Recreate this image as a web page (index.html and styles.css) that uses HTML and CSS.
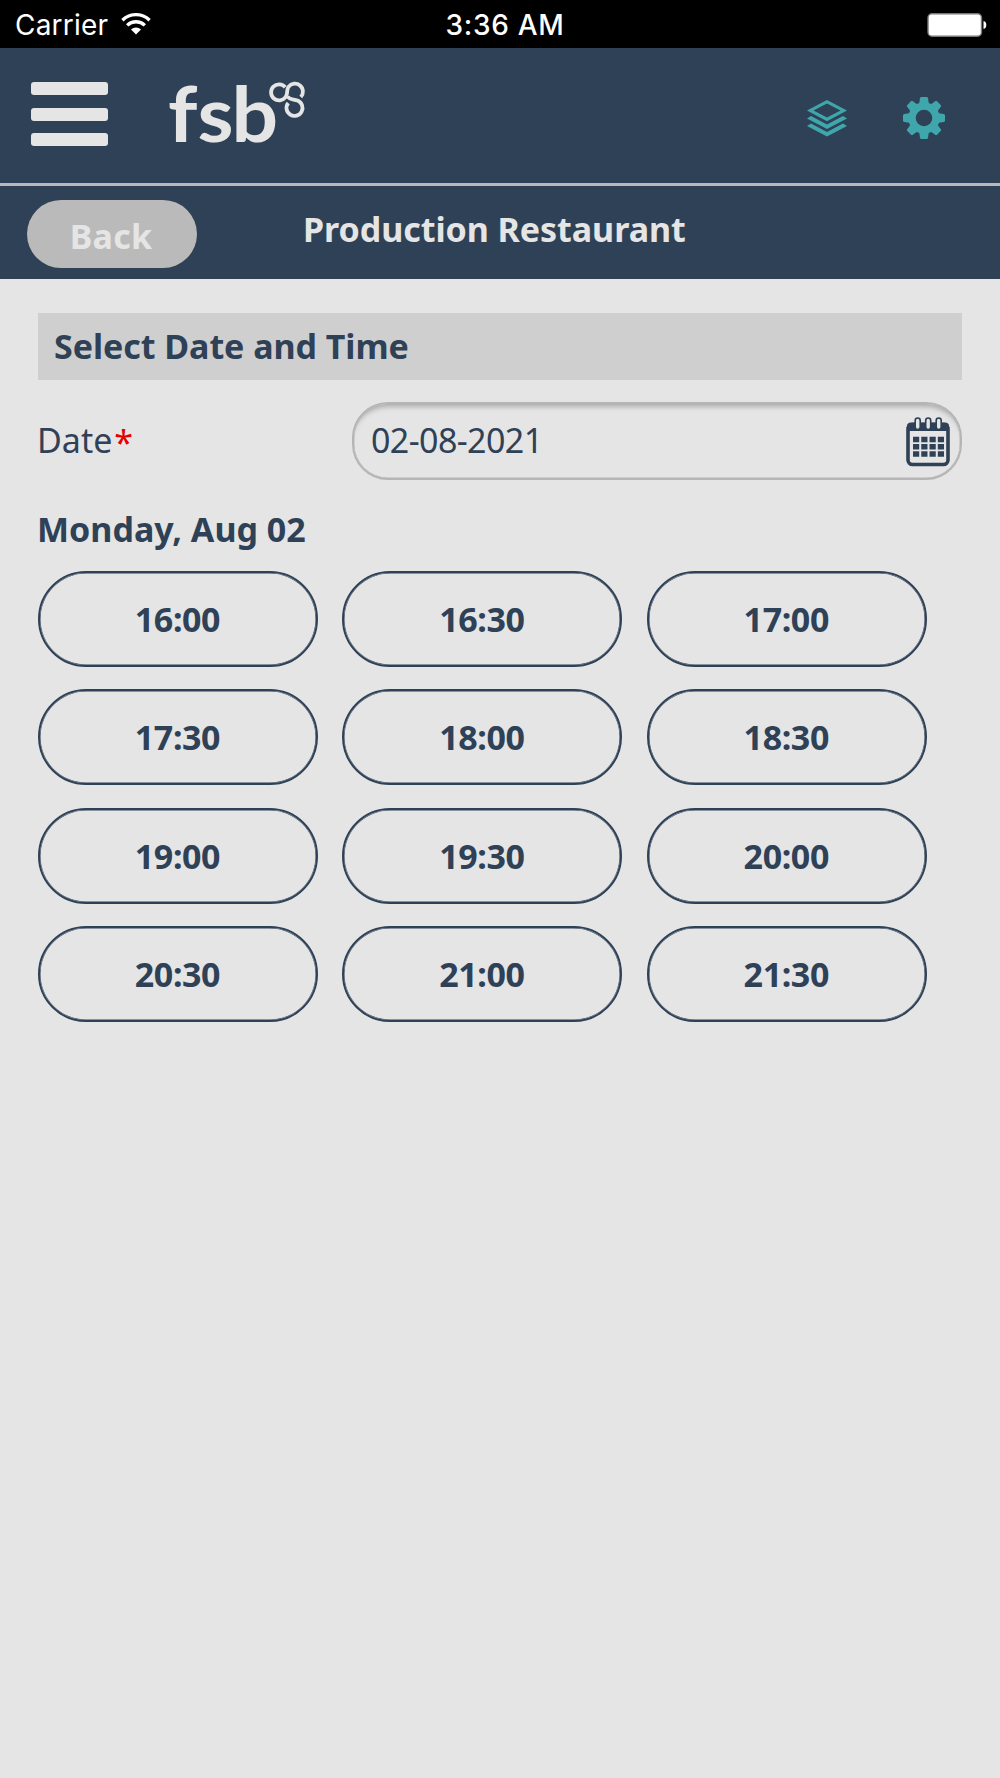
FILE: index.html
```html
<!DOCTYPE html>
<html lang="en">
<head>
<meta charset="utf-8">
<title>Production Restaurant</title>
<link rel="stylesheet" href="styles.css">
</head>
<body>
<div class="status">
  <div class="carrier"><span class="carrier-name">Carrier</span>
    <svg class="wifi" width="30" height="22" viewBox="0 0 30 22"><g fill="none" stroke="#fff" stroke-width="3.4"><path d="M1.4 7.2A19.5 19.5 0 0 1 28.6 7.2"/><path d="M6.2 12.4A12.6 12.6 0 0 1 23.8 12.4"/></g><path d="M15 21.5L10 16.5A7.2 7.2 0 0 1 20 16.5Z" fill="#fff"/></svg>
  </div>
  <div class="clock">3:36 AM</div>
  <svg class="battery" width="60" height="24" viewBox="0 0 60 24"><rect x="1" y=".8" width="53.500" height="22.400" rx="4" fill="#fff" stroke="#777" stroke-width="1.4"/><path d="M56.500 8Q59.300 8.500 59.300 12T56.500 16Z" fill="#fff"/></svg>
</div>
<header class="header">
  <button class="menu" aria-label="Menu"><span></span><span></span><span></span></button>
  <svg class="logo" width="150" height="110" viewBox="160 58 150 110" role="img" aria-label="fsb">
    <g class="wordmark"><text transform="translate(168 141.800) scale(1.080 1)">f</text><text transform="translate(197.500 141.800) scale(1.080 1)">s</text><text transform="translate(231.500 141.800) scale(1.080 1)">b</text></g>
    <g fill="none" stroke="#e5e5e5" stroke-width="3.8"><path d="M285.2 87.2A8 8 0 1 0 285.6 97C288.5 93 286 90 288.5 86.8A8 8 0 1 1 300.8 97"/><path d="M287.5 96.500C290 100 293 99 297.5 100.5A8 8 0 1 1 288.2 103"/></g>
  </svg>
  <div class="tools">
    <svg width="42" height="42" viewBox="806 97 42 42"><g fill="#3fa7ab"><path fill-rule="evenodd" d="M807 110.500L827 100L847 110.500L827 121.300ZM813.500 110.500L827 117.500L840.500 110.500L827 103.600Z"/><path id="sheet" d="M807 118.500L811 116L827 124.500L843 116L847 118.500L827 128.900Z"/><use href="#sheet" y="7.600"/></g></svg>
    <svg width="42" height="42" viewBox="0 0 42 42"><g fill="#3fa7ab"><path id="tooth" d="M17 1.2Q17.2 0 18.400 0H23.600Q24.800 0 25 1.200L26 8H16Z"/><use href="#tooth" transform="rotate(45 21 21)"/><use href="#tooth" transform="rotate(90 21 21)"/><use href="#tooth" transform="rotate(135 21 21)"/><use href="#tooth" transform="rotate(180 21 21)"/><use href="#tooth" transform="rotate(225 21 21)"/><use href="#tooth" transform="rotate(270 21 21)"/><use href="#tooth" transform="rotate(315 21 21)"/></g><circle cx="21" cy="21" r="12" fill="none" stroke="#3fa7ab" stroke-width="7.400"/></svg>
  </div>
</header>
<div class="titlebar">
  <button class="back">Back</button>
  <h1 class="title">Production Restaurant</h1>
</div>
<main class="content">
  <h2 class="section">Select Date and Time</h2>
  <div class="field">
    <label class="label">Date<span class="required">*</span></label>
    <div class="input"><span class="value">02-08-2021</span>
      <svg class="calendar" width="44" height="50" viewBox="0 0 44 50"><rect x="2" y="7.5" width="40" height="40" rx="4.5" fill="none" stroke="#2f4156" stroke-width="3.6"/><path d="M1 14V9Q1 5.500 5 5.500H39Q43 5.500 43 9V14Z" fill="#2f4156"/><g fill="#e5e5e5" stroke="#2f4156" stroke-width="1.6"><rect x="9.200" y="1" width="5" height="11.500" rx="2.500"/><rect x="19.700" y="1" width="5" height="11.500" rx="2.500"/><rect x="30.200" y="1" width="5" height="11.500" rx="2.500"/></g><path d="M7 22.500H38M7 29.800H38M7 37H38" stroke="#2f4156" stroke-width="5.600" stroke-dasharray="6.200 2.070"/></svg>
    </div>
  </div>
  <h3 class="day">Monday, Aug 02</h3>
  <div class="slots">
    <button class="slot">16:00</button><button class="slot">16:30</button><button class="slot">17:00</button>
    <button class="slot">17:30</button><button class="slot">18:00</button><button class="slot">18:30</button>
    <button class="slot">19:00</button><button class="slot">19:30</button><button class="slot">20:00</button>
    <button class="slot">20:30</button><button class="slot">21:00</button><button class="slot">21:30</button>
  </div>
</main>
</body>
</html>
```
FILE: styles.css
```css
* { box-sizing: border-box; }
body { margin: 0; width: 1000px; min-height: 1778px; background: #e5e5e5; color: #2f4156; font-family: "Noto Sans", sans-serif; font-size: 34px; }
button { margin: 0; font: inherit; color: inherit; background: none; border: 0; padding: 0; }
h1, h2, h3 { margin: 0; font-size: inherit; font-weight: 700; }
svg { display: block; flex: none; }

.status { height: 48px; background: #000; color: #fff; display: grid; grid-template-columns: 1fr auto 1fr; align-items: center; padding: 0 13px 0 15px; font: 400 28px/48px Inter, sans-serif; }
.carrier { display: flex; align-items: center; gap: 12px; padding-top: 1px; }
.carrier-name { width: 94px; white-space: nowrap; letter-spacing: .2px; }
.wifi { margin-top: -3px; }
.clock { font-weight: 500; width: 120px; text-align: center; white-space: nowrap; letter-spacing: .7px; margin-left: 8px; padding-top: 1px; }
.battery { justify-self: end; }

.header { height: 138px; background: #2f4156; border-bottom: 3px solid #bababa; display: flex; align-items: flex-start; padding-left: 31px; }
.menu { width: 76.500px; margin-top: 34.400px; display: flex; flex-direction: column; gap: 12.500px; }
.menu span { height: 13px; border-radius: 3px; background: #e5e5e5; }
.logo { margin: 10px 0 0 52.500px; }
.wordmark { font: 700 76px Lato, sans-serif; fill: #e5e5e5; }
.tools { margin: 49px 55px 0 auto; display: flex; gap: 55px; }

.titlebar { height: 92.500px; background: #2f4156; color: #e5e5e5; display: flex; align-items: flex-start; padding-left: 27px; }
.back { width: 170px; height: 68px; margin-top: 13.500px; border-radius: 34px; background: #bababa; color: #e5e5e5; font-weight: 700; padding: 4px 2px 0 0; letter-spacing: .2px; }
.title { margin-left: 106px; line-height: 86px; white-space: nowrap; letter-spacing: -.05px; }

.content { padding: 34px 38px 0; }
.section { height: 67px; line-height: 66px; background: #cfcfcf; padding-left: 16px; letter-spacing: -.05px; }
.field { display: flex; justify-content: space-between; margin-top: 22px; height: 78px; }
.label { line-height: 77px; margin-left: -1px; }
.required { color: #e60000; margin-left: 2px; position: relative; top: 2px; }
.input { width: 610px; border: 2px solid #b5b5b5; border-radius: 36px; display: flex; align-items: center; justify-content: space-between; padding: 0 10px 0 17px; box-shadow: inset 0 7px 5px -4px #b0b0b0, inset 0 0 0 .4px #b5b5b5; }
.value { margin-top: -1px; letter-spacing: -.6px; }
.calendar { margin-top: 2px; }
.day { line-height: 48px; margin: 25px 0 0 -1px; }
.slots { display: grid; grid-template-columns: repeat(3, 280px); column-gap: 24.400px; row-gap: 22.600px; margin-top: 18px; }
.slot { height: 96px; border: 2px solid #2f4156; border-radius: 48px; box-shadow: inset 0 0 0 .5px #2f4156; font-weight: 700; letter-spacing: -.4px; padding: 0 1px 0 0; }
```
